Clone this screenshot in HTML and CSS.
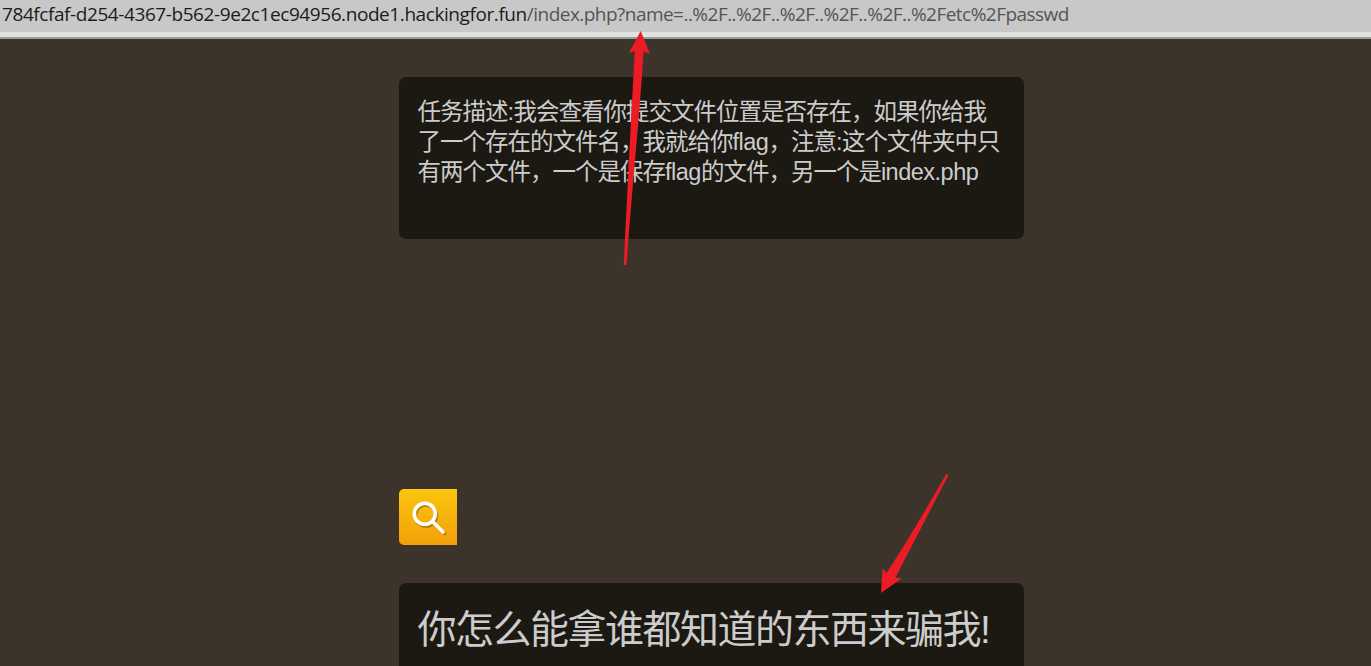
FILE: index.html
```html
<!DOCTYPE html>
<html lang="zh-CN">
<head>
<meta charset="utf-8">
<title>index.php</title>
<link rel="stylesheet" href="styles.css">
</head>
<body>
<header class="address"><span class="host">784fcfaf-d254-4367-b562-9e2c1ec94956.node1.hackingfor.fun</span><span class="path">/index.php?name=..%2F..%2F..%2F..%2F..%2F..%2Fetc%2Fpasswd</span></header>
<main class="page">
  <section class="card task">任务描述<span class="latin">:</span>我会查看你提交文件位置是否存在，如果你给我<br>了一个存在的文件名，我就给你<span class="latin">flag</span>，注意<span class="latin">:</span>这个文件夹中只<br>有两个文件，一个是保存<span class="latin">flag</span>的文件，另一个是<span class="latin">index.php</span></section>
  <button class="search" aria-label="search">
    <svg width="58" height="56" viewBox="0 0 58 56" fill="none">
      <g class="glass-shadow"><circle cx="27" cy="26.5" r="10.5"/><path d="M35 34.5 45.5 44.5"/></g>
      <g class="glass"><circle cx="25.8" cy="24.8" r="10.5"/><path d="M33.5 32.5 44 43"/></g>
    </svg>
  </button>
  <section class="card result">你怎么能拿谁都知道的东西来骗我!</section>
</main>
<svg class="arrows" width="1371" height="666" viewBox="0 0 1371 666">
  <path d="M640.7 31 650 54 643.5 51.5 C641 100 632 190 626.5 265 L623.8 265 C627 200 632 100 634.8 51 L629 53Z"/>
  <path d="M881 593 882.5 568 886.5 573 Q914 531 946 474.5 L948.3 474 948 476 Q920 530 895.5 577.5 L901.5 578.5Z"/>
</svg>
</body>
</html>
```
FILE: styles.css
```css
body {
  margin: 0;
  height: 666px;
  overflow: hidden;
  background: #3c342b;
  color: #ccc;
  font-family: "Liberation Sans", "Noto Sans CJK SC", sans-serif;
}
.address {
  box-sizing: border-box;
  height: 39px;
  padding-left: 2px;
  background: #c8c8c8;
  border-bottom: 2px solid #9c9c9e;
  box-shadow: inset 0 -5px #e2e2e2;
  font: 19px/29px "Open Sans", sans-serif;
  white-space: nowrap;
}
.host { color: #1c1c1c; letter-spacing: -0.42px; }
.path { color: #555; letter-spacing: -0.53px; }
.page {
  width: 625px;
  margin-left: 399px;
  padding-top: 38px;
  display: flex;
  flex-direction: column;
  align-items: flex-start;
}
.card {
  box-sizing: border-box;
  width: 625px;
  padding: 20px 18px 0 18.5px;
  border-radius: 7px;
  background: #1c1913;
  white-space: nowrap;
}
.task { height: 162px; font-size: 23.5px; line-height: 30px; letter-spacing: -1px; }
.latin { letter-spacing: -0.5px; }
.search {
  width: 58px;
  height: 56px;
  margin: 250px 0 38px;
  padding: 0;
  border: 0;
  border-radius: 5px 0 0 5px;
  background: linear-gradient(#fac60e, #f2a00a);
}
.search svg { display: block; }
.glass, .glass-shadow { stroke-width: 3.6; stroke-linecap: round; }
.glass { stroke: #fff; }
.glass-shadow { stroke: #98640b; opacity: .65; }
.result {
  height: 83px;
  border-radius: 7px 7px 0 0;
  font-size: 39px;
  line-height: 54px;
  letter-spacing: -1.5px;
}
.arrows { position: absolute; left: 0; top: 0; fill: #ed1c24; }
```
